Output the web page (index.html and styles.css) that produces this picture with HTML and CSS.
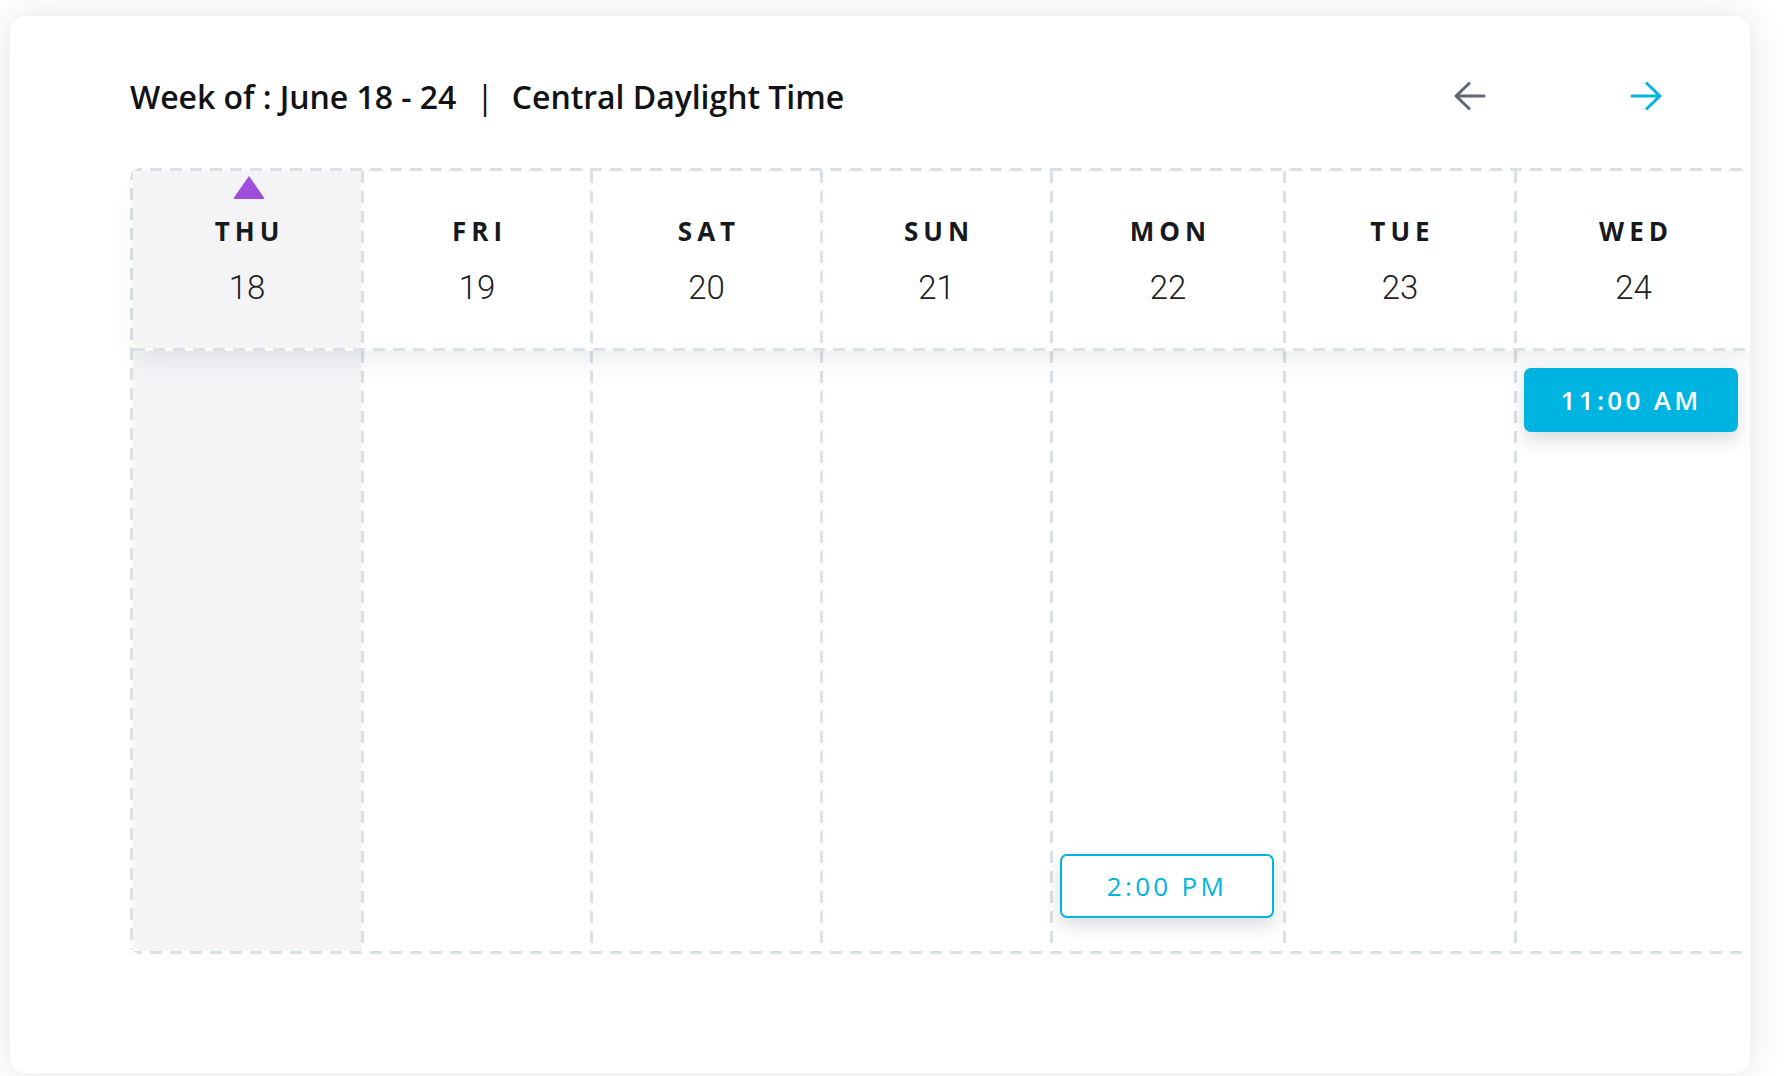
FILE: index.html
```html
<!DOCTYPE html>
<html lang="en">
<head>
<meta charset="utf-8">
<title>Week schedule</title>
<link rel="stylesheet" href="styles.css">
</head>
<body>
<main class="card">
  <header class="topbar">
    <h1 class="title">Week of : June 18 - 24<span class="sep">|</span>Central Daylight Time</h1>
    <nav class="arrows">
      <button class="arrow arrow-prev" aria-label="Previous week">
        <svg viewBox="0 0 32 28" width="32" height="28"><path d="M30 14H2M15 1.5L2 14l13 12.5"/></svg>
      </button>
      <button class="arrow arrow-next" aria-label="Next week">
        <svg viewBox="0 0 32 28" width="32" height="28"><path d="M2 14h28M17 1.5L30 14 17 26.5"/></svg>
      </button>
    </nav>
  </header>

  <section class="grid">
    <div class="head-row">
      <div class="head-cell today"><span class="marker"></span><span class="dname">THU</span><span class="dnum">18</span></div>
      <div class="head-cell"><span class="dname">FRI</span><span class="dnum">19</span></div>
      <div class="head-cell"><span class="dname">SAT</span><span class="dnum">20</span></div>
      <div class="head-cell"><span class="dname">SUN</span><span class="dnum">21</span></div>
      <div class="head-cell"><span class="dname">MON</span><span class="dnum">22</span></div>
      <div class="head-cell"><span class="dname">TUE</span><span class="dnum">23</span></div>
      <div class="head-cell"><span class="dname">WED</span><span class="dnum">24</span></div>
    </div>
    <div class="body-row">
      <div class="day-col today"></div>
      <div class="day-col"></div>
      <div class="day-col"></div>
      <div class="day-col"></div>
      <div class="day-col"><button class="slot slot-outline" style="top: 503px;">2:00 PM</button></div>
      <div class="day-col"></div>
      <div class="day-col"><button class="slot slot-filled" style="top: 17px;">11:00 AM</button></div>
    </div>
  </section>
</main>
</body>
</html>
```

FILE: styles.css
```css
* { box-sizing: border-box; }

:root {
  --line: #d9e0e6;
  --dash-v: repeating-linear-gradient(to bottom, var(--line) 0 12px, transparent 12px 20px);
  --dash-h: repeating-linear-gradient(to right, var(--line) 0 12px, transparent 12px 20px);
}

html, body {
  margin: 0;
  background: #ffffff;
}

body {
  padding: 16px 0 0 10px;
  font-family: "Open Sans", "Noto Sans", "Liberation Sans", sans-serif;
  color: #15181c;
  height: 1076px;
  overflow: hidden;
}

.card {
  width: 1740px;
  height: 1057px;
  background: #ffffff;
  border-radius: 16px;
  box-shadow: 0 0 36px rgba(30, 40, 55, 0.12);
  overflow: hidden;
  padding: 48px 0 0 120px;
}

.topbar {
  display: flex;
  align-items: center;
  justify-content: space-between;
  height: 64px;
  padding-right: 88px;
}

.title {
  margin: 0;
  font-size: 32px;
  font-weight: 600;
  color: #111316;
  letter-spacing: -0.05px;
  white-space: nowrap;
}

.sep {
  margin: 0 18px 0 20px;
  font-weight: 400;
}

.arrows {
  display: flex;
  gap: 144px;
  align-items: center;
}

.arrow {
  border: 0;
  background: none;
  padding: 0;
  width: 32px;
  height: 28px;
  display: block;
  cursor: pointer;
}

.arrow svg {
  display: block;
  fill: none;
  stroke-width: 3;
  stroke-linecap: round;
  stroke-linejoin: round;
}

.arrow-prev svg { stroke: #5e6976; }
.arrow-next svg { stroke: #02b3e2; }

.grid {
  margin-top: 40px;
  width: 1626px;
  padding: 3px;
  border-radius: 10px;
  background-image: var(--dash-h), var(--dash-h), var(--dash-v), var(--dash-v);
  background-size: 100% 3px, 100% 3px, 3px 100%, 3px 100%;
  background-position: left top, left bottom, left top, right top;
  background-repeat: no-repeat;
}

.head-row,
.body-row {
  display: grid;
  grid-template-columns: 228px 229px 230px 230px 233px 231px 1fr;
}

.head-row {
  position: relative;
  z-index: 1;
  height: 180px;
  padding-bottom: 3px;
  background: var(--dash-h) left bottom / 100% 3px no-repeat;
  box-shadow: 0 14px 24px -6px rgba(40, 55, 70, 0.10);
}

.head-cell {
  position: relative;
  display: flex;
  flex-direction: column;
  align-items: center;
  padding: 42px 0 0 3px;
  background: #ffffff var(--dash-v) left top / 3px 100% no-repeat;
}

.head-cell:first-child {
  padding-left: 0;
  background-image: none;
  border-top-left-radius: 8px;
  border-bottom-left-radius: 8px;
}
.head-cell:nth-child(7) { padding-right: 3px; border-top-right-radius: 8px; }

.head-cell.today { background-color: #f4f4f7; }

.marker {
  position: absolute;
  top: 5px;
  left: 50%;
  width: 32px;
  height: 23px;
  margin-left: -14px;
  background: #9f4ddb;
  clip-path: polygon(50% 0, 100% 100%, 0 100%);
  border-radius: 2px;
}

.dname {
  font-size: 26px;
  line-height: 36px;
  font-weight: 700;
  letter-spacing: 5px;
  margin-right: -5px;
  color: #16191d;
}

.dnum {
  margin-top: 18px;
  font-family: "Roboto", "Open Sans", sans-serif;
  font-size: 33px;
  line-height: 42px;
  font-weight: 300;
  color: #1e2125;
}

.body-row {
  height: 600px;
}

.day-col {
  position: relative;
  padding-left: 3px;
  background: var(--dash-v) left top / 3px 100% no-repeat;
}

.day-col:first-child {
  padding-left: 0;
  background-image: none;
  border-bottom-left-radius: 8px;
}
.day-col.today { background-color: #f4f4f7; }

.slot {
  position: absolute;
  left: 10px;
  width: 214px;
  height: 64px;
  border-radius: 7px;
  font-family: "Open Sans", "Noto Sans", sans-serif;
  font-size: 26px;
  letter-spacing: 3.3px;
  display: flex;
  align-items: center;
  justify-content: center;
  padding: 0;
  box-shadow: 0 8px 18px rgba(30, 40, 50, 0.16);
  cursor: pointer;
}

.slot-filled {
  background: #00b4e1;
  border: 2px solid #00b4e1;
  color: #ffffff;
  font-weight: 600;
}

.slot-outline {
  background: #ffffff;
  border: 2px solid #00b4e1;
  color: #00b4e1;
  font-weight: 500;
}
```
